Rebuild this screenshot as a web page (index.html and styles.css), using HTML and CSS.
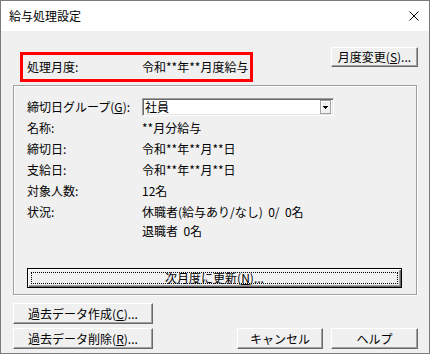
FILE: index.html
```html
<!DOCTYPE html>
<html lang="ja">
<head>
<meta charset="utf-8">
<link rel="stylesheet" href="styles.css">
</head>
<body>
<div class="window">
  <div class="titlebar">
    <span class="title">給与処理設定</span>
    <svg class="close" width="10" height="10" viewBox="0 0 10 10"><path d="M0.5 0.5L9.5 9.5M9.5 0.5L0.5 9.5" stroke="#000" stroke-width="1" fill="none"/></svg>
  </div>
  <div class="content">
    <div class="toprow">
      <div class="month-box">
        <span class="label">処理月度:</span>
        <span class="value">令和**年**月度給与</span>
      </div>
      <button class="btn btn-month">月度変更(<u>S</u>)...</button>
    </div>
    <div class="group">
      <div class="row">
        <span class="label">締切日グループ(<u>G</u>):</span>
        <div class="combo">
          <span class="combo-text">社員</span>
          <span class="combo-btn"><svg width="5" height="3" viewBox="0 0 5 3"><path d="M0 0H5V1H0Z M1 1H4V2H1Z M2 2H3V3H2Z" fill="#000"/></svg></span>
        </div>
      </div>
      <div class="row"><span class="label">名称:</span><span class="value">**月分給与</span></div>
      <div class="row"><span class="label">締切日:</span><span class="value">令和**年**月**日</span></div>
      <div class="row"><span class="label">支給日:</span><span class="value">令和**年**月**日</span></div>
      <div class="row"><span class="label">対象人数:</span><span class="value">12名</span></div>
      <div class="row status">
        <span class="label">状況:</span>
        <div class="status-lines">
          <span class="line1">休職者(給与あり/なし)  0/  0名</span>
          <span class="line2">退職者  0名</span>
        </div>
      </div>
      <button class="btn btn-default"><span class="focus">次月度に更新(<u>N</u>)...</span></button>
    </div>
    <div class="bottom">
      <div class="col-left">
        <button class="btn btn-wide">過去データ作成(<u>C</u>)...</button>
        <button class="btn btn-wide">過去データ削除(<u>R</u>)...</button>
      </div>
      <div class="col-right">
        <button class="btn btn-cancel">キャンセル</button>
        <button class="btn btn-help">ヘルプ</button>
      </div>
    </div>
  </div>
</div>
</body>
</html>
```

FILE: styles.css
```css
* { box-sizing: border-box; }
html, body { margin: 0; padding: 0; background: #fff; }
body {
  font-family: "Noto Sans CJK JP", "Noto Sans", sans-serif;
  font-size: 12px;
  color: #000;
}
.window {
  width: 430px;
  height: 354px;
  border: 1px solid #7a7a7a;
  background: #f0f0f0;
  display: flex;
  flex-direction: column;
}
.titlebar {
  height: 30px;
  background: #fff;
  display: flex;
  align-items: center;
  padding: 0 10px 0 8px;
  justify-content: space-between;
  flex: none;
}
.title { font-size: 12px; line-height: 14px; }
.close { display: block; margin-top: -1px; }
.content {
  padding: 16px 11px 0 12px;
  display: flex;
  flex-direction: column;
}
.toprow {
  height: 38px;
  display: flex;
  align-items: flex-start;
}
.month-box {
  margin: 5px 0 0 7px;
  width: 233px;
  height: 30px;
  border: 3px solid #ff0000;
  display: flex;
  align-items: center;
  padding-left: 4px;
}
.month-box .label { width: 115px; flex: none; }
.label { white-space: nowrap; line-height: 14px; }
.value { white-space: nowrap; line-height: 14px; }
.btn {
  font-family: inherit;
  font-size: 12px;
  color: #000;
  background: #f0f0f0;
  border-top: 1px solid #fff;
  border-left: 1px solid #fff;
  border-right: 1px solid #696969;
  border-bottom: 1px solid #696969;
  box-shadow: inset -1px -1px 0 #a0a0a0;
  padding: 0;
  margin: 0;
  display: flex;
  align-items: center;
  justify-content: center;
  line-height: 14px;
  white-space: pre;
}
.btn-month {
  margin-left: auto;
  width: 87px;
  height: 20px;
}
.group {
  width: 404px;
  height: 210px;
  border: 1px solid #a0a0a0;
  box-shadow: inset 1px 1px 0 #fff, 1px 1px 0 #fff;
  padding: 10px 0 0 13px;
  display: flex;
  flex-direction: column;
}
.row {
  display: flex;
  align-items: center;
  height: 21px;
}
.row .label { width: 115px; flex: none; }
.combo {
  width: 192px;
  height: 18px;
  background: #fff;
  border-top: 1px solid #a0a0a0;
  border-left: 1px solid #a0a0a0;
  border-right: 1px solid #fff;
  border-bottom: 1px solid #fff;
  box-shadow: inset 1px 1px 0 #696969, inset -1px -1px 0 #e3e3e3;
  display: flex;
  align-items: center;
  padding: 2px 2px 2px 2px;
}
.combo-text { flex: 1; line-height: 14px; padding-left: 0; }
.combo-btn {
  width: 11px;
  height: 14px;
  background: #f0f0f0;
  border: 1px solid #a0a0a0;
  box-shadow: inset 1px 1px 0 #fff;
  display: flex;
  align-items: center;
  justify-content: center;
}
.combo-btn svg { display: block; margin-top: 1px; }
.status { height: auto; align-items: flex-start; }
.status .label { line-height: 21px; }
.status-lines { display: flex; flex-direction: column; }
.line1 { line-height: 21px; white-space: pre; }
.line2 { line-height: 18px; white-space: pre; }
.btn-default {
  margin-top: 28px;
  width: 375px;
  height: 20px;
  border: 1px solid #000;
  box-shadow: inset 1px 1px 0 #fff, inset -1px -1px 0 #696969, inset -2px -2px 0 #a0a0a0;
  padding: 3px;
}
.focus {
  flex: 1;
  align-self: stretch;
  border: 1px dotted #000;
  display: flex;
  align-items: center;
  justify-content: center;
  line-height: 12px;
}
.bottom {
  margin-top: 8px;
  display: flex;
  justify-content: space-between;
}
.col-left {
  display: flex;
  flex-direction: column;
  gap: 4px;
}
.btn-wide { width: 140px; height: 21px; }
.col-right {
  display: flex;
  gap: 8px;
  align-items: flex-end;
}
.btn-cancel { width: 86px; height: 21px; }
.btn-help { width: 87px; height: 21px; }
```
